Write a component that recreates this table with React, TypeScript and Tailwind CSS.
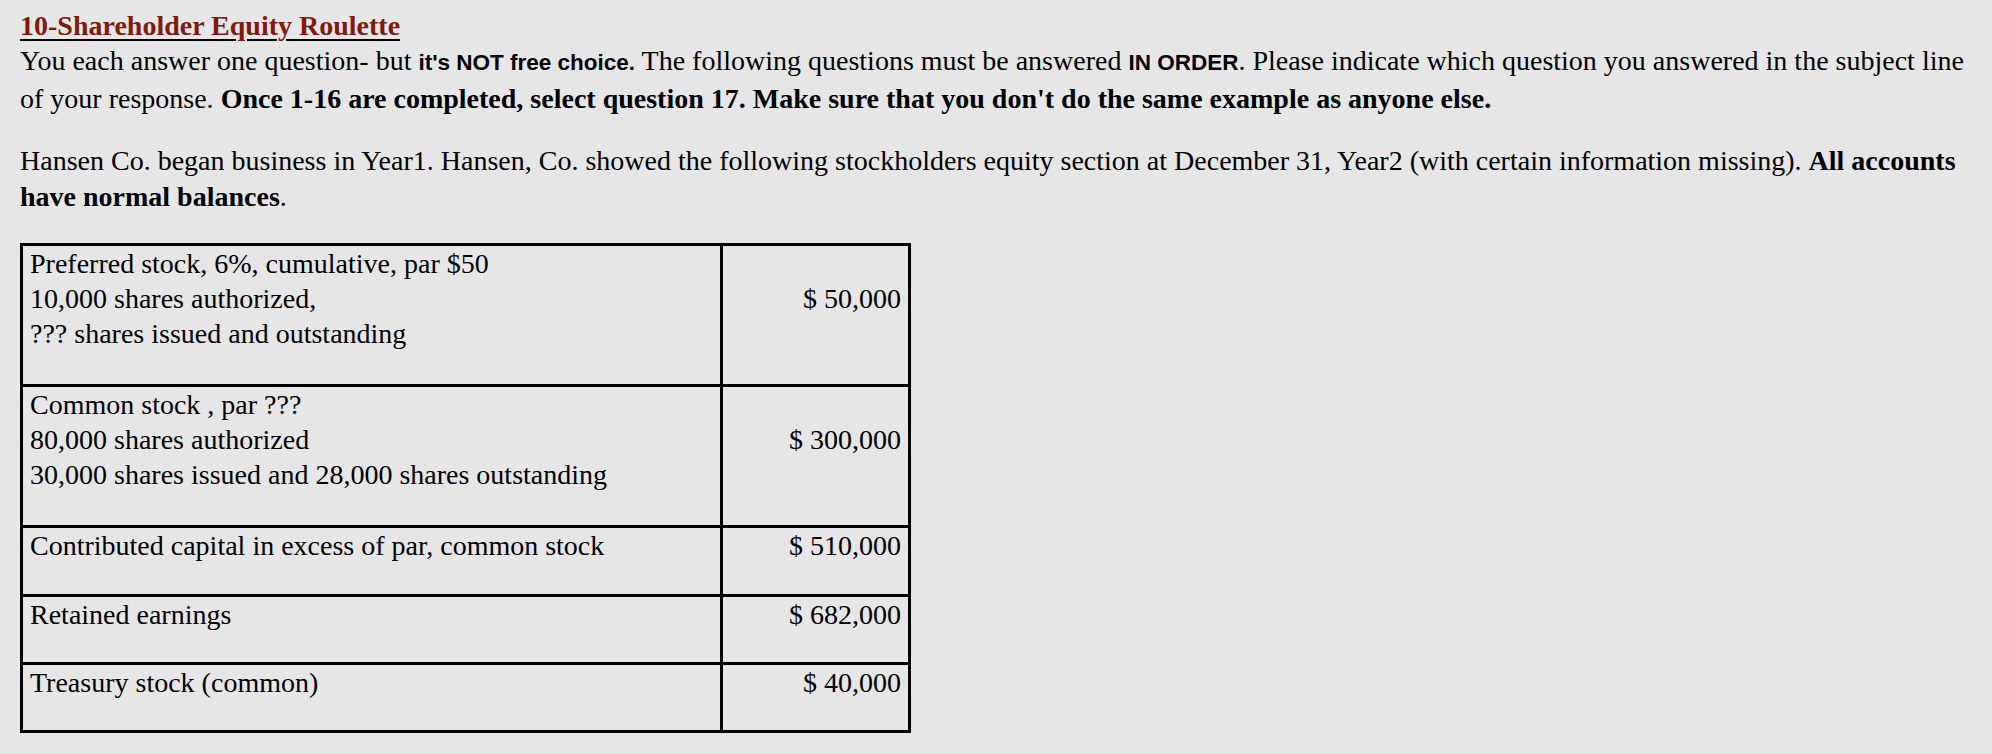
const serif = "font-['Liberation_Serif','Times_New_Roman',serif]"
const sans = "font-['Liberation_Sans',Arial,sans-serif] font-bold text-[22.5px]"

const rows = [
  {
    label: ["Preferred stock, 6%, cumulative, par $50", "10,000 shares authorized,", "??? shares issued and outstanding"],
    value: "$ 50,000",
    valueLine: 1,
    h: "h-[141px]",
  },
  {
    label: ["Common stock , par ???", "80,000 shares authorized", "30,000 shares issued and 28,000 shares outstanding"],
    value: "$ 300,000",
    valueLine: 1,
    h: "h-[141px]",
  },
  { label: ["Contributed capital in excess of par, common stock"], value: "$ 510,000", valueLine: 0, h: "h-[69px]" },
  { label: ["Retained earnings"], value: "$ 682,000", valueLine: 0, h: "h-[68px]" },
  { label: ["Treasury stock (common)"], value: "$ 40,000", valueLine: 0, h: "h-[68px]" },
]

const App = () => {
  return (
    <div className={`min-h-[754px] w-full bg-[#e6e6e6] text-black ${serif} text-[28px] leading-[35px] pl-[20px] pr-[8px] pt-[8px]`}>
      <div className="font-bold text-[#821a0a] underline decoration-black decoration-[2px] underline-offset-[4px]">
        10-Shareholder Equity Roulette
      </div>
      <p className="leading-[36px]">
        You each answer one question- but <span className={sans}>it's NOT free choice.</span> The following questions
        must be answered <span className={sans}>IN ORDER</span>. Please indicate which question you answered in the
        subject line of your response.{" "}
        <b>Once 1-16 are completed, select question 17. Make sure that you don't do the same example as anyone else.</b>
      </p>
      <p className="mt-[26px] leading-[36px] pr-[12px]">
        Hansen Co. began business in Year1. Hansen, Co. showed the following stockholders equity section at December
        31, Year2 (with certain information missing). <b>All accounts have normal balances</b>.
      </p>

      <div className="mt-[28px] w-[891px] border-[3px] border-b-0 border-black">
        {rows.map((r, i) => (
          <div key={i} className={`flex ${r.h} border-b-[3px] border-black`}>
            <div className="w-[700px] border-r-[3px] border-black pl-[7px]">
              {r.label.map((l, j) => (
                <div key={j}>{l}</div>
              ))}
            </div>
            <div className="flex-1 pr-[7px] text-right">
              {r.valueLine === 1 && <div>&nbsp;</div>}
              <div>{r.value}</div>
            </div>
          </div>
        ))}
      </div>
    </div>
  )
}
export default App
